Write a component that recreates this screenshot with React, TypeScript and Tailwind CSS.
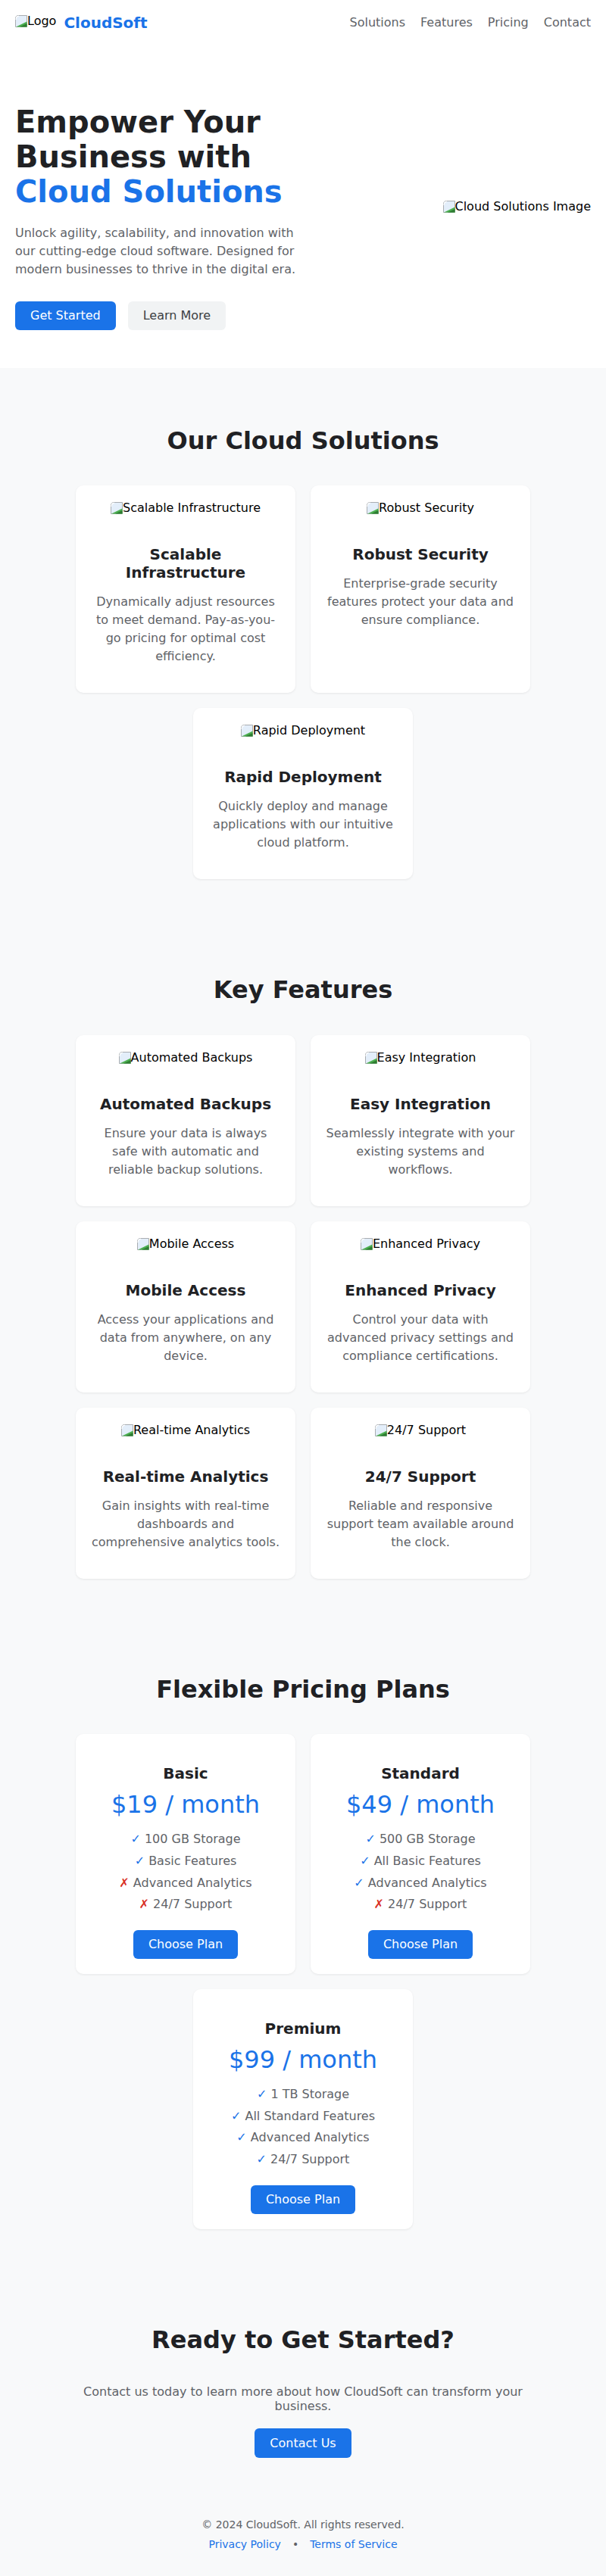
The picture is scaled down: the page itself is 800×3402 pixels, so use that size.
import type { ReactNode } from "react";

type Card = {
  title: string;
  text: string;
};

type Plan = {
  name: string;
  price: string;
  features: { label: string; included: boolean }[];
};

const solutions: Card[] = [
  {
    title: "Scalable Infrastructure",
    text: "Dynamically adjust resources to meet demand. Pay-as-you-go pricing for optimal cost efficiency.",
  },
  {
    title: "Robust Security",
    text: "Enterprise-grade security features protect your data and ensure compliance.",
  },
  {
    title: "Rapid Deployment",
    text: "Quickly deploy and manage applications with our intuitive cloud platform.",
  },
];

const features: Card[] = [
  {
    title: "Automated Backups",
    text: "Ensure your data is always safe with automatic and reliable backup solutions.",
  },
  {
    title: "Easy Integration",
    text: "Seamlessly integrate with your existing systems and workflows.",
  },
  {
    title: "Mobile Access",
    text: "Access your applications and data from anywhere, on any device.",
  },
  {
    title: "Enhanced Privacy",
    text: "Control your data with advanced privacy settings and compliance certifications.",
  },
  {
    title: "Real-time Analytics",
    text: "Gain insights with real-time dashboards and comprehensive analytics tools.",
  },
  {
    title: "24/7 Support",
    text: "Reliable and responsive support team available around the clock.",
  },
];

const plans: Plan[] = [
  {
    name: "Basic",
    price: "$19 / month",
    features: [
      { label: "100 GB Storage", included: true },
      { label: "Basic Features", included: true },
      { label: "Advanced Analytics", included: false },
      { label: "24/7 Support", included: false },
    ],
  },
  {
    name: "Standard",
    price: "$49 / month",
    features: [
      { label: "500 GB Storage", included: true },
      { label: "All Basic Features", included: true },
      { label: "Advanced Analytics", included: true },
      { label: "24/7 Support", included: false },
    ],
  },
  {
    name: "Premium",
    price: "$99 / month",
    features: [
      { label: "1 TB Storage", included: true },
      { label: "All Standard Features", included: true },
      { label: "Advanced Analytics", included: true },
      { label: "24/7 Support", included: true },
    ],
  },
];

// Stand-in for a picture that did not load: the broken-picture glyph plus its alt text
function BrokenImage({ alt, className = "" }: { alt: string; className?: string }) {
  return (
    <span className={`inline-flex shrink-0 items-center whitespace-nowrap text-[16px] leading-[20px] text-black ${className}`}>
      <svg width="16" height="16" viewBox="0 0 16 16" className="shrink-0" aria-hidden="true">
        <path
          d="M4 0.5h11.5v15h-15V4C0.5 2 2 0.5 4 0.5z"
          fill="#e3eefa"
          stroke="#a9adb1"
        />
        <path d="M1 6C1 3.5 2.5 1.5 5 1.2" fill="none" stroke="#ffffff" strokeWidth="1.2" />
        <path d="M1 15.5L15.5 8.5v7z" fill="#4caf50" />
        <path d="M6 15.5L15.5 11v4.5z" fill="#2e7d32" />
      </svg>
      <span>{alt}</span>
    </span>
  );
}

function Section({ title, children }: { title: string; children: ReactNode }) {
  return (
    <section className="px-5 pt-[77px] pb-[50px]">
      <h2 className="mb-10 text-center text-[32px] leading-[1.2] font-bold text-[#202124]">
        {title}
      </h2>
      {children}
    </section>
  );
}

function InfoCard({ title, text }: Card) {
  return (
    <div className="w-[290px] rounded-[10px] bg-white p-5 text-center shadow-[0_1px_3px_rgba(0,0,0,0.08)]">
      <div className="flex h-[59px] items-start justify-center">
        <BrokenImage alt={title} />
      </div>
      <h3 className="mb-[15px] text-xl leading-6 font-bold text-[#202124]">{title}</h3>
      <p className="mb-4 text-base leading-6 text-[#5f6368]">{text}</p>
    </div>
  );
}

function PlanCard({ plan }: { plan: Plan }) {
  return (
    <div className="w-[290px] rounded-[10px] bg-white px-5 pt-10 pb-5 text-center shadow-[0_1px_3px_rgba(0,0,0,0.08)]">
      <h3 className="mb-2.5 text-xl leading-6 font-bold text-[#202124]">{plan.name}</h3>
      <div className="mb-3 text-[32px] leading-[1.2] text-[#1a73e8]">{plan.price}</div>

      <ul className="mb-[19px]">
        {plan.features.map((feature) => (
          <li key={feature.label} className="py-[2.4px] text-base leading-6 text-[#5f6368]">
            {feature.included ? (
              <span className="text-[#1a73e8]">✓</span>
            ) : (
              <span className="text-[#d93025]">✗</span>
            )}{" "}
            {feature.label}
          </li>
        ))}
      </ul>

      <button
        type="button"
        className="rounded-md bg-[#1a73e8] px-5 py-[7.2px] text-base leading-6 text-white"
      >
        Choose Plan
      </button>
    </div>
  );
}

export default function App() {
  return (
    <div className="min-h-screen bg-[#f8f9fa] font-['DejaVu_Sans',sans-serif]">
      {/* Header */}
      <header className="flex h-[60px] items-center justify-between bg-white px-5">
        <div className="flex shrink-0 items-center gap-2.5">
          <BrokenImage alt="Logo" className="-mt-1" />
          <span className="whitespace-nowrap text-[20px] leading-[28px] font-bold text-[#1a73e8]">
            CloudSoft
          </span>
        </div>

        <nav className="flex gap-5 text-base leading-6 text-[#5f6368]">
          <a href="#solutions">Solutions</a>
          <a href="#features">Features</a>
          <a href="#pricing">Pricing</a>
          <a href="#contact">Contact</a>
        </nav>
      </header>

      {/* Hero */}
      <section className="bg-white px-5 pt-[78px] pb-[50px]">
        <div className="grid grid-cols-2">
          <div>
            <h1 className="mb-5 text-[40px] leading-[1.15] font-bold text-[#202124]">
              Empower Your Business with{" "}
              <span className="text-[#1a73e8]">Cloud Solutions</span>
            </h1>

            <p className="mb-[30px] text-base leading-6 text-[#5f6368]">
              Unlock agility, scalability, and innovation with our cutting-edge cloud
              software. Designed for modern businesses to thrive in the digital era.
            </p>

            <div className="flex gap-4">
              <button
                type="button"
                className="rounded-md bg-[#1a73e8] px-5 py-[7px] text-base leading-6 text-white"
              >
                Get Started
              </button>
              <button
                type="button"
                className="rounded-md bg-[#f1f3f4] px-5 py-[7px] text-base leading-6 text-[#3c4043]"
              >
                Learn More
              </button>
            </div>
          </div>

          <div className="flex items-center justify-end">
            <BrokenImage alt="Cloud Solutions Image" className="mb-7" />
          </div>
        </div>
      </section>

      {/* Solutions */}
      <Section title="Our Cloud Solutions">
        <div className="mx-auto flex max-w-[600px] flex-wrap justify-center gap-5">
          {solutions.map((card) => (
            <InfoCard key={card.title} {...card} />
          ))}
        </div>
      </Section>

      {/* Features */}
      <Section title="Key Features">
        <div className="mx-auto flex max-w-[600px] flex-wrap justify-center gap-5">
          {features.map((card) => (
            <InfoCard key={card.title} {...card} />
          ))}
        </div>
      </Section>

      {/* Pricing */}
      <Section title="Flexible Pricing Plans">
        <div className="mx-auto flex max-w-[600px] flex-wrap justify-center gap-5">
          {plans.map((plan) => (
            <PlanCard key={plan.name} plan={plan} />
          ))}
        </div>
      </Section>

      {/* Call to action */}
      <Section title="Ready to Get Started?">
        <div className="text-center">
          <p className="mx-auto mb-5 max-w-[600px] text-base leading-[normal] text-[#5f6368]">
            Contact us today to learn more about how CloudSoft can transform your business.
          </p>
          <button
            type="button"
            className="rounded-md bg-[#1a73e8] px-5 py-[7.2px] text-base leading-6 text-white"
          >
            Contact Us
          </button>
        </div>
      </Section>

      {/* Footer */}
      <footer className="px-5 py-7 text-center text-sm">
        <p className="mb-1.5 leading-5 text-[#5f6368]">© 2024 CloudSoft. All rights reserved.</p>
        <div className="flex items-center justify-center gap-[15px] leading-5">
          <a href="#privacy" className="text-[#1a73e8]">
            Privacy Policy
          </a>
          <span className="text-[#5f6368]">•</span>
          <a href="#terms" className="text-[#1a73e8]">
            Terms of Service
          </a>
        </div>
      </footer>
    </div>
  );
}
